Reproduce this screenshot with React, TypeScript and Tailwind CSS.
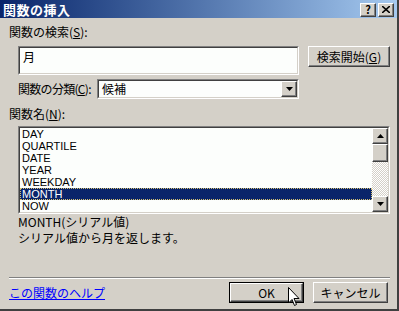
import type { ReactNode } from 'react'

const font = { fontFamily: '"Noto Sans CJK JP", "DejaVu Sans", sans-serif' }

const items = ['DAY', 'QUARTILE', 'DATE', 'YEAR', 'WEEKDAY', 'MONTH', 'NOW']

function Raised({ className = '', children }: { className?: string; children?: ReactNode }) {
  return (
    <div
      className={`flex shrink-0 items-center justify-center whitespace-nowrap bg-[#d4d0c8] border border-t-white border-l-white border-b-[#404040] border-r-[#404040] shadow-[inset_-1px_-1px_#808080] ${className}`}
    >
      {children}
    </div>
  )
}

function Sunken({ className = '', children }: { className?: string; children?: ReactNode }) {
  return (
    <div
      className={`shrink-0 border border-t-[#808080] border-l-[#808080] border-b-white border-r-white ${className}`}
    >
      <div className="h-full w-full border border-t-[#404040] border-l-[#404040] border-b-[#d4d0c8] border-r-[#d4d0c8] bg-[#fcfefc]">
        {children}
      </div>
    </div>
  )
}

function Arrow({ up }: { up?: boolean }) {
  return (
    <svg width="7" height="4" viewBox="0 0 7 4">
      <path d={up ? 'M3.5 0 L7 4 L0 4 Z' : 'M0 0 L7 0 L3.5 4 Z'} fill="#000" />
    </svg>
  )
}

export default function App() {
  return (
    <div
      className="relative w-[399px] h-[311px] overflow-hidden whitespace-nowrap bg-[#d4d0c8] text-[12px] leading-[12px] text-black border-r-2 border-b-2 border-r-[#404040] border-b-[#404040]"
      style={font}
    >
      <div className="flex h-[18px] items-center justify-between bg-gradient-to-r from-[#0a246a] to-[#a6caf0] pl-[3px] pr-[3px]">
        <span className="text-[13px] leading-[13px] font-bold text-white tracking-[0.5px]">関数の挿入</span>
        <div className="flex gap-[2px] pt-[1px]">
          <Raised className="h-[14px] w-[16px] text-[11px] leading-[11px] font-bold">?</Raised>
          <Raised className="h-[14px] w-[16px]">
            <svg width="8" height="7" viewBox="0 0 8 7">
              <path d="M0 0 L8 7 M8 0 L0 7" stroke="#000" strokeWidth="1.6" />
            </svg>
          </Raised>
        </div>
      </div>

      <div className="flex flex-col pl-[9px] pr-[9px]">
        <div className="mt-[8px] h-[12px]">
          関数の検索(<span className="underline">S</span>):
        </div>
        <div className="mt-[8px] flex h-[29px] items-start pl-[9px]">
          <Sunken className="h-[29px] w-[281px]">
            <div className="pl-[3px] pt-[3px]">月</div>
          </Sunken>
          <Raised className="ml-[9px] h-[21px] w-[82px]">
            検索開始(<span className="underline">G</span>)
          </Raised>
        </div>
        <div className="mt-[4px] flex h-[20px] items-center pl-[9px]">
          <span className="w-[79px] shrink-0 tracking-[-0.7px]">
            関数の分類(<span className="underline">C</span>):
          </span>
          <Sunken className="h-[20px] w-[202px]">
            <div className="flex h-full items-center justify-between">
              <span className="pl-[3px]">候補</span>
              <Raised className="h-[16px] w-[16px]">
                <Arrow />
              </Raised>
            </div>
          </Sunken>
        </div>
        <div className="mt-[9px] h-[12px]">
          関数名(<span className="underline">N</span>):
        </div>
        <div className="mt-[6px] pl-[9px]">
          <Sunken className="h-[88px] w-[372px]">
            <div className="flex h-full">
              <div className="flex-1 font-['Liberation_Sans',sans-serif] text-[11px] leading-[12px]">
                {items.map((it) => (
                  <div
                    key={it}
                    className={
                      it === 'MONTH'
                        ? 'h-[12px] pl-[2px] bg-[#0a246a] text-white outline-1 outline-dotted outline-[#d4c070] -outline-offset-1'
                        : 'h-[12px] pl-[2px]'
                    }
                  >
                    {it}
                  </div>
                ))}
              </div>
              <div className="flex w-[16px] flex-col">
                <Raised className="h-[16px] w-[16px]">
                  <Arrow up />
                </Raised>
                <Raised className="h-[18px] w-[16px]" />
                <div className="flex-1 bg-[repeating-conic-gradient(#d4d0c8_0%_25%,#ffffff_0%_50%)] bg-[length:2px_2px]" />
                <Raised className="h-[16px] w-[16px]">
                  <Arrow />
                </Raised>
              </div>
            </div>
          </Sunken>
        </div>
        <div className="mt-[2px] h-[12px] pl-[9px]">MONTH(シリアル値)</div>
        <div className="mt-[4px] h-[12px] pl-[9px]">シリアル値から月を返します。</div>
        <div className="mt-[33px] w-[381px] border-t border-b border-t-[#808080] border-b-white" />
        <div className="mt-[3px] flex h-[21px] items-start justify-between">
          <span className="mt-[5px] text-[#0000ff] underline">この関数のヘルプ</span>
          <div className="flex gap-[9px]">
            <div className="border border-black">
              <Raised className="h-[19px] w-[73px]">OK</Raised>
            </div>
            <Raised className="h-[21px] w-[75px]">キャンセル</Raised>
          </div>
        </div>
      </div>

      <svg className="absolute left-[288px] top-[287px]" width="12" height="20" viewBox="0 0 12 20">
        <path
          d="M0.5 0.5 L0.5 16 L4 12.5 L6.5 18.5 L8.5 17.5 L6 11.5 L11 11.5 Z"
          fill="#fff"
          stroke="#000"
          strokeWidth="1"
        />
      </svg>
    </div>
  )
}
